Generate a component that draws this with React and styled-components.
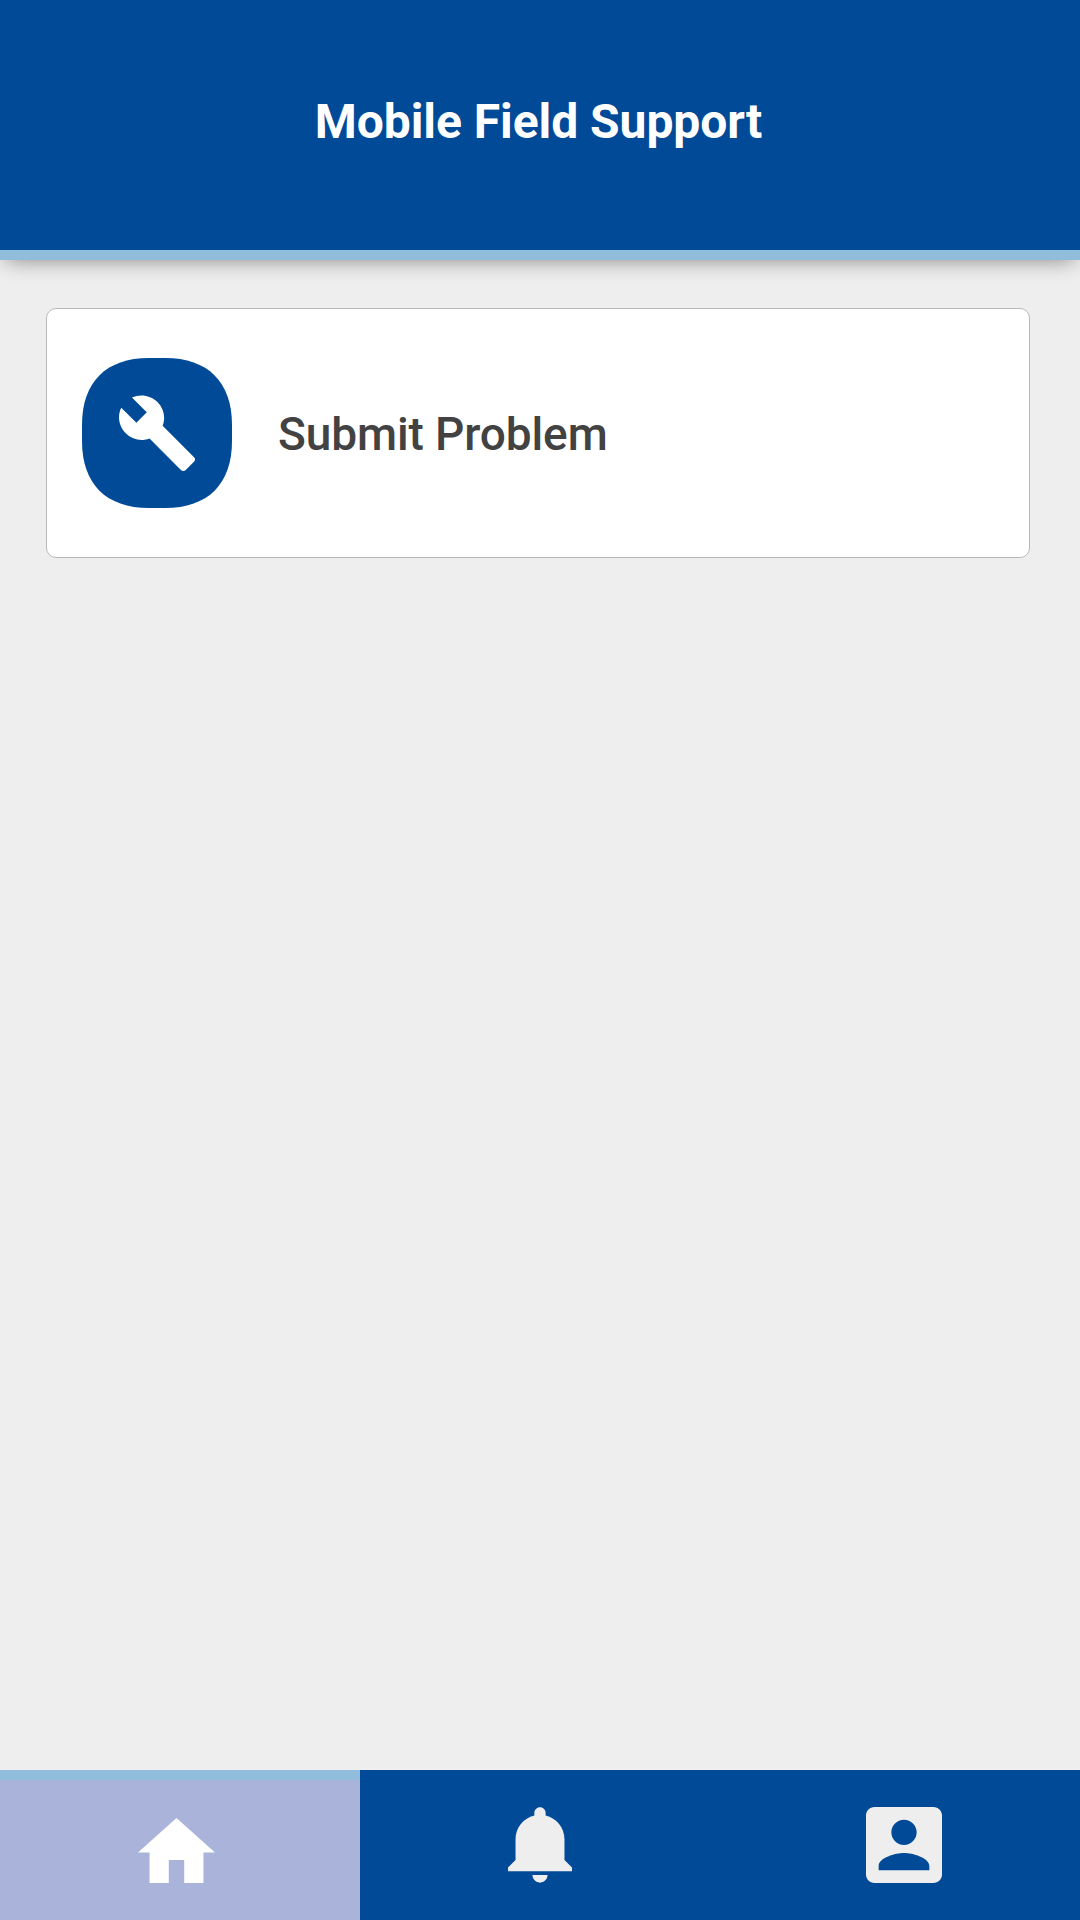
import React from "react";
import styled, { createGlobalStyle } from "styled-components";

const GlobalStyle = createGlobalStyle`
  * { box-sizing: border-box; }
  body { margin: 0; background: #eee; font-family: Roboto, sans-serif; }
`;

const Screen = styled.div`
  height: 1920px;
  display: flex;
  flex-direction: column;
  background: #eee;
  overflow: hidden;
`;

const Header = styled.header`
  flex: none;
  height: 260px;
  display: flex;
  justify-content: center;
  padding: 92px 3px 0 0;
  background: #004a97;
  border-bottom: 10px solid #91bddd;
  box-shadow: 0 6px 20px -6px rgba(0, 0, 0, 0.44);
`;

const Title = styled.h1`
  margin: 0;
  font: 700 48px/60px Roboto, sans-serif;
  letter-spacing: -0.05px;
  color: #fff;
  white-space: nowrap;
`;

const Content = styled.main`
  flex: 1;
  padding: 48px 50px 0 46px;
`;

const Card = styled.button`
  display: flex;
  align-items: center;
  gap: 46px;
  width: 100%;
  height: 250px;
  padding: 0 35px;
  border: 1px solid #b9b9b9;
  border-radius: 10px;
  background: #fff;
  text-align: left;
`;

const Badge = styled.svg`
  flex: none;
  display: block;
  width: 150px;
  height: 150px;
`;

const CardLabel = styled.span`
  padding-top: 2px;
  font: 500 46px/60px Roboto, sans-serif;
  letter-spacing: -0.12px;
  color: #424242;
  white-space: nowrap;
`;

const TabBar = styled.nav`
  flex: none;
  display: grid;
  grid-template-columns: repeat(3, 1fr);
  height: 150px;
`;

const Tab = styled.button`
  display: flex;
  justify-content: center;
  align-items: flex-start;
  margin: 0;
  border: 0;
  border-top: 10px solid ${(p) => (p.$active ? "#91bddd" : "#004a97")};
  padding: ${(p) => (p.$active ? "38px 7px 0 0" : "27px 0 0")};
  background: ${(p) => (p.$active ? "#aab3d9" : "#004a97")};
  color: ${(p) => (p.$active ? "#fff" : "#eee")};
`;

const TabIcon = styled.svg`
  display: block;
  fill: currentColor;
  width: ${(p) => p.$w}px;
  height: ${(p) => p.$h}px;
  margin-left: ${(p) => p.$shift || 0}px;
`;

export default function App() {
  return (
    <Screen>
      <GlobalStyle />
      <Header>
        <Title>Mobile Field Support</Title>
      </Header>
      <Content>
        <Card type="button">
          <Badge viewBox="0 0 150 150">
            <path
              fill="#004a97"
              d="M67 0H83C126 0 150 24 150 67V83C150 126 126 150 83 150H67C24 150 0 126 0 83V67C0 24 24 0 67 0Z"
            />
            <svg x="37" y="37" width="76" height="76" viewBox="0.95 0.98 22.03 22.03">
              <path
                fill="#fff"
                d="M22.7 19l-9.1-9.1c.9-2.3.4-5-1.5-6.9-2-2-5-2.4-7.4-1.3L9 6 6 9 1.6 4.7C.4 7.1.9 10.1 2.9 12.1c1.9 1.9 4.6 2.4 6.9 1.5l9.1 9.1c.4.4 1 .4 1.4 0l2.3-2.3c.5-.4.5-1.1.1-1.4z"
              />
            </svg>
          </Badge>
          <CardLabel>Submit Problem</CardLabel>
        </Card>
      </Content>
      <TabBar>
        <Tab type="button" $active>
          <TabIcon $w={77} $h={65} viewBox="2 3 20 17" preserveAspectRatio="none">
            <path d="M10 20v-6h4v6h5v-8h3L12 3 2 12h3v8z" />
          </TabIcon>
        </Tab>
        <Tab type="button">
          <TabIcon $w={64} $h={76} viewBox="3 2 17 20">
            <path d="M11.5 22c1.1 0 2-.9 2-2h-4c0 1.1.9 2 2 2zm6.5-6v-5.5c0-3.07-2.13-5.64-5-6.32V3.5c0-.83-.67-1.5-1.5-1.5S10 2.67 10 3.5v.68c-2.87.68-5 3.25-5 6.32V16l-2 2v1h17v-1l-2-2z" />
          </TabIcon>
        </Tab>
        <Tab type="button">
          <TabIcon $w={76} $h={76} $shift={8} viewBox="3 3 18 18">
            <path d="M3 5v14c0 1.1.89 2 2 2h14c1.1 0 2-.9 2-2V5c0-1.1-.9-2-2-2H5c-1.11 0-2 .9-2 2zm12 4c0 1.66-1.34 3-3 3s-3-1.34-3-3 1.34-3 3-3 3 1.34 3 3zm-9 8c0-2 4-3.1 6-3.1s6 1.1 6 3.1v1H6v-1z" />
          </TabIcon>
        </Tab>
      </TabBar>
    </Screen>
  );
}
